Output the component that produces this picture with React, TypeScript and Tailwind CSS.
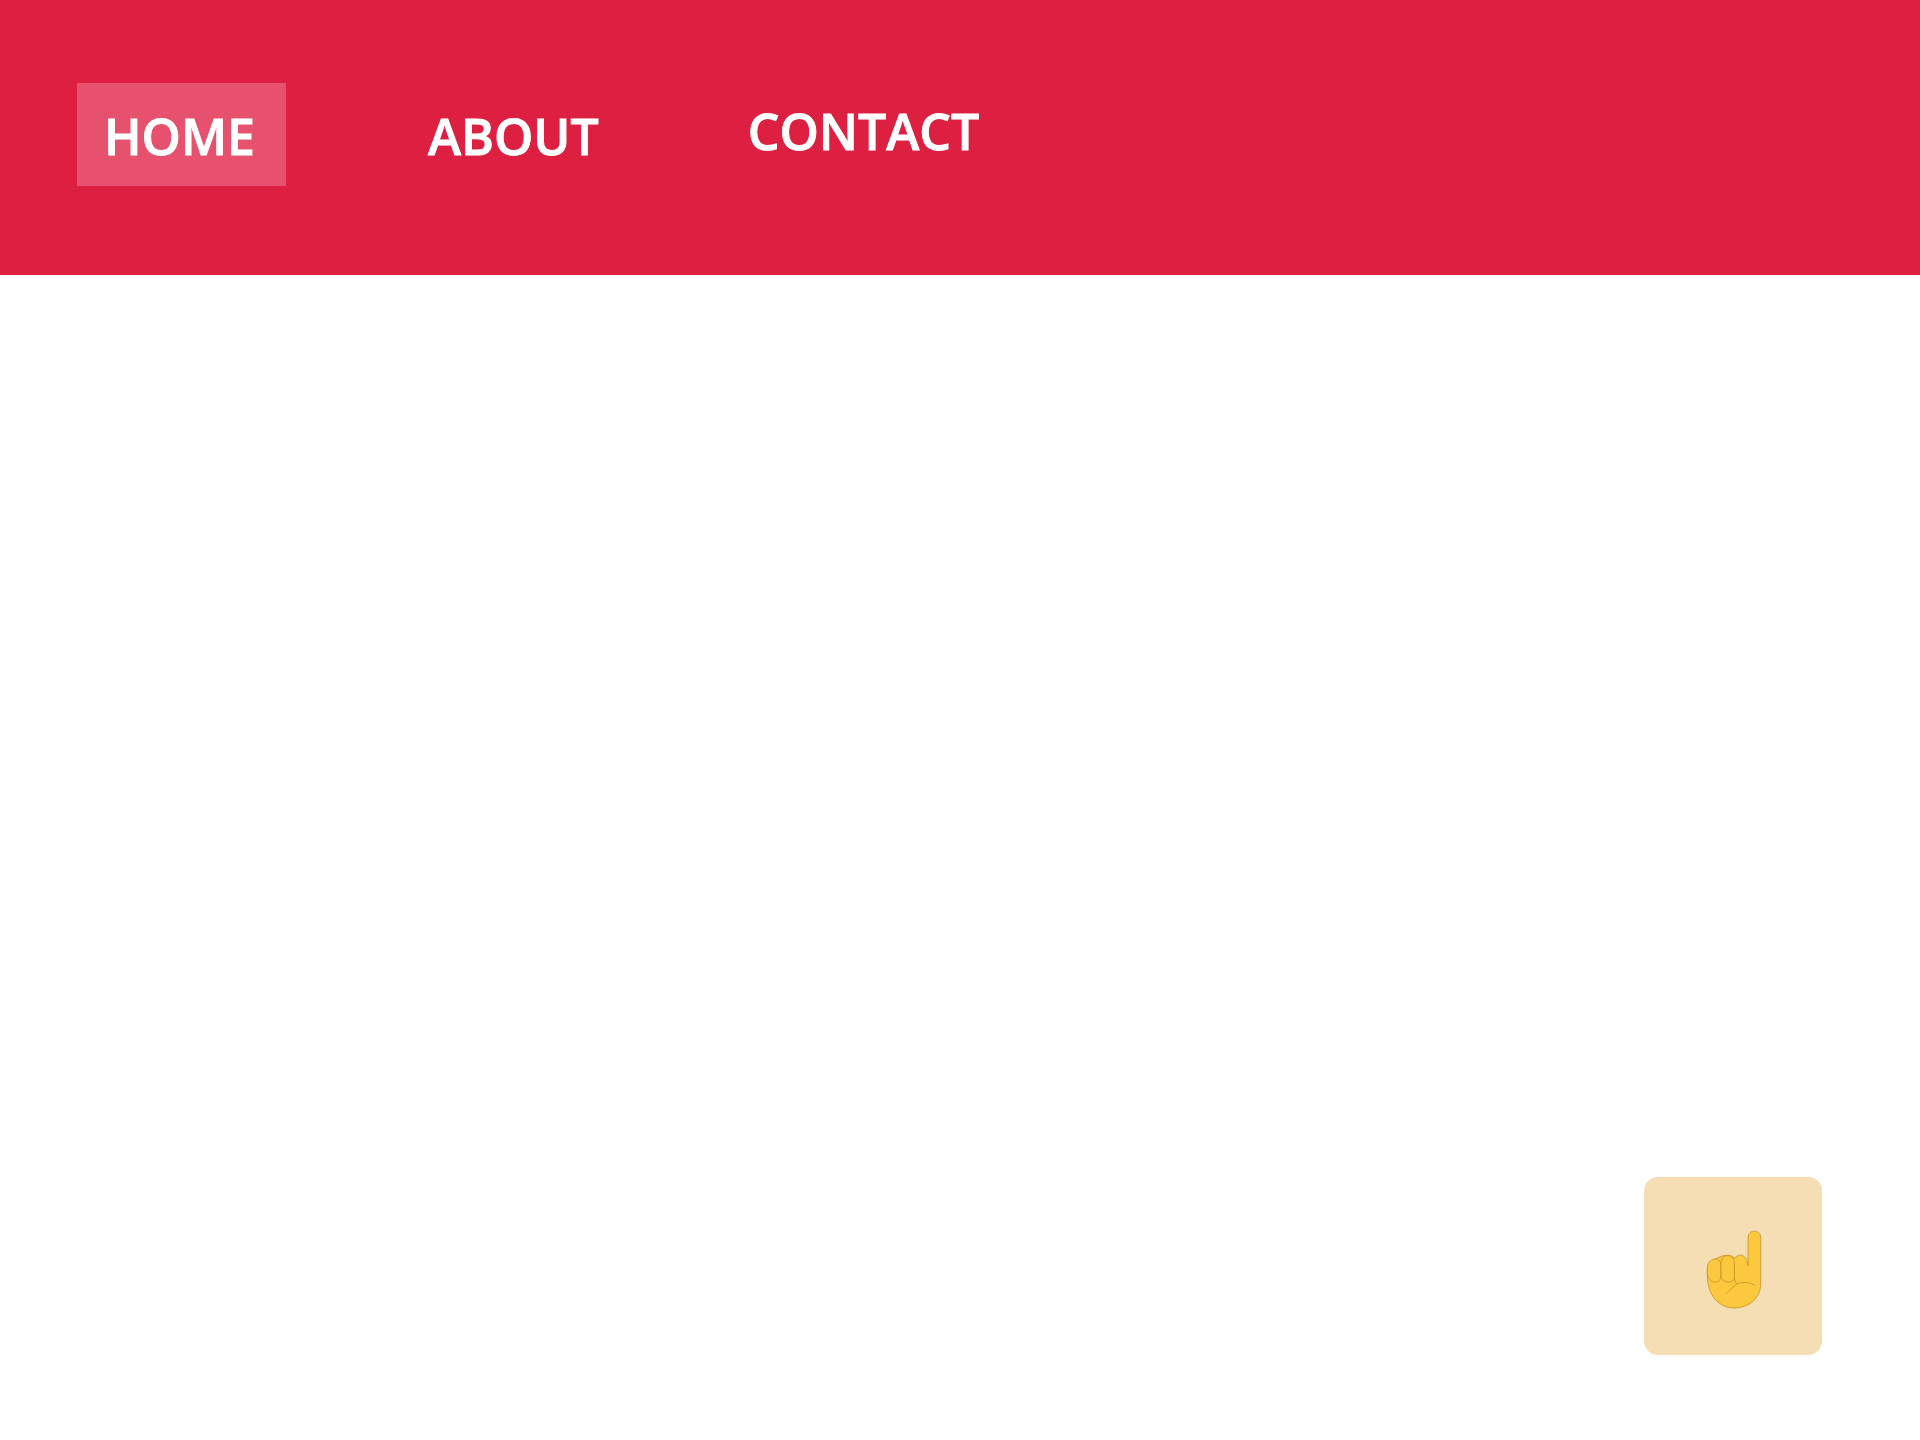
import React from "react";

const links = [
  { name: "HOME", className: "ml-[77px] mt-[83px] h-[103px] w-[209px] bg-[#e6526e] pl-[27px] pt-[21px]" },
  { name: "ABOUT", className: "ml-[142px] mt-[104px]" },
  { name: "CONTACT", className: "ml-[149px] mt-[99px]" },
];

const PointingHand = () => (
  <svg viewBox="225 205 175 245" className="mt-[6px] ml-[2px] h-[82px] w-[58px]" fill="#fcc83e" stroke="#c9952f" strokeWidth="2.5" strokeLinejoin="round">
    {/* palm, middle finger and raised finger as one shape */}
    <path d="M355 318 L355 232 C355 207 393 207 393 232 L393 372 C393 415 358 445 312 445 C268 445 232 408 232 345 L232 325 C234 300 300 270 314 296 C326 278 352 282 355 318 Z" />
    {/* curled fingers */}
    <path d="M232 325 C232 304 248 296 260 297 C268 298 273 306 273 318 L273 348 C273 370 252 372 240 360 C234 354 232 346 232 340 Z" />
    <path d="M273 314 C273 296 282 287 293 287 C306 287 314 298 314 312 L314 352 C314 372 280 372 274 352 Z" />
    <path d="M314 352 C314 362 316 368 320 372" fill="none" />
    {/* thumb crease */}
    <path d="M288 402 C300 390 312 380 322 372 C340 366 362 366 376 378" fill="none" />
  </svg>
);

const App: React.FC = () => {
  return (
    <div className="relative min-h-screen bg-white font-['Open_Sans','Noto_Sans',sans-serif]">
      <nav className="flex h-[275px] flex-row items-start bg-[#dd2041]">
        {links.map((link) => (
          <a key={link.name} href="#" className={`block text-[50px] font-semibold leading-[65px] text-white [-webkit-text-stroke:0.9px_white] ${link.className}`}>
            {link.name}
          </a>
        ))}
      </nav>
      <button className="absolute right-[98px] top-[1177px] flex h-[178px] w-[178px] items-center justify-center rounded-[14px] bg-[#f5deb3]">
        <PointingHand />
      </button>
    </div>
  );
};

export default App;
